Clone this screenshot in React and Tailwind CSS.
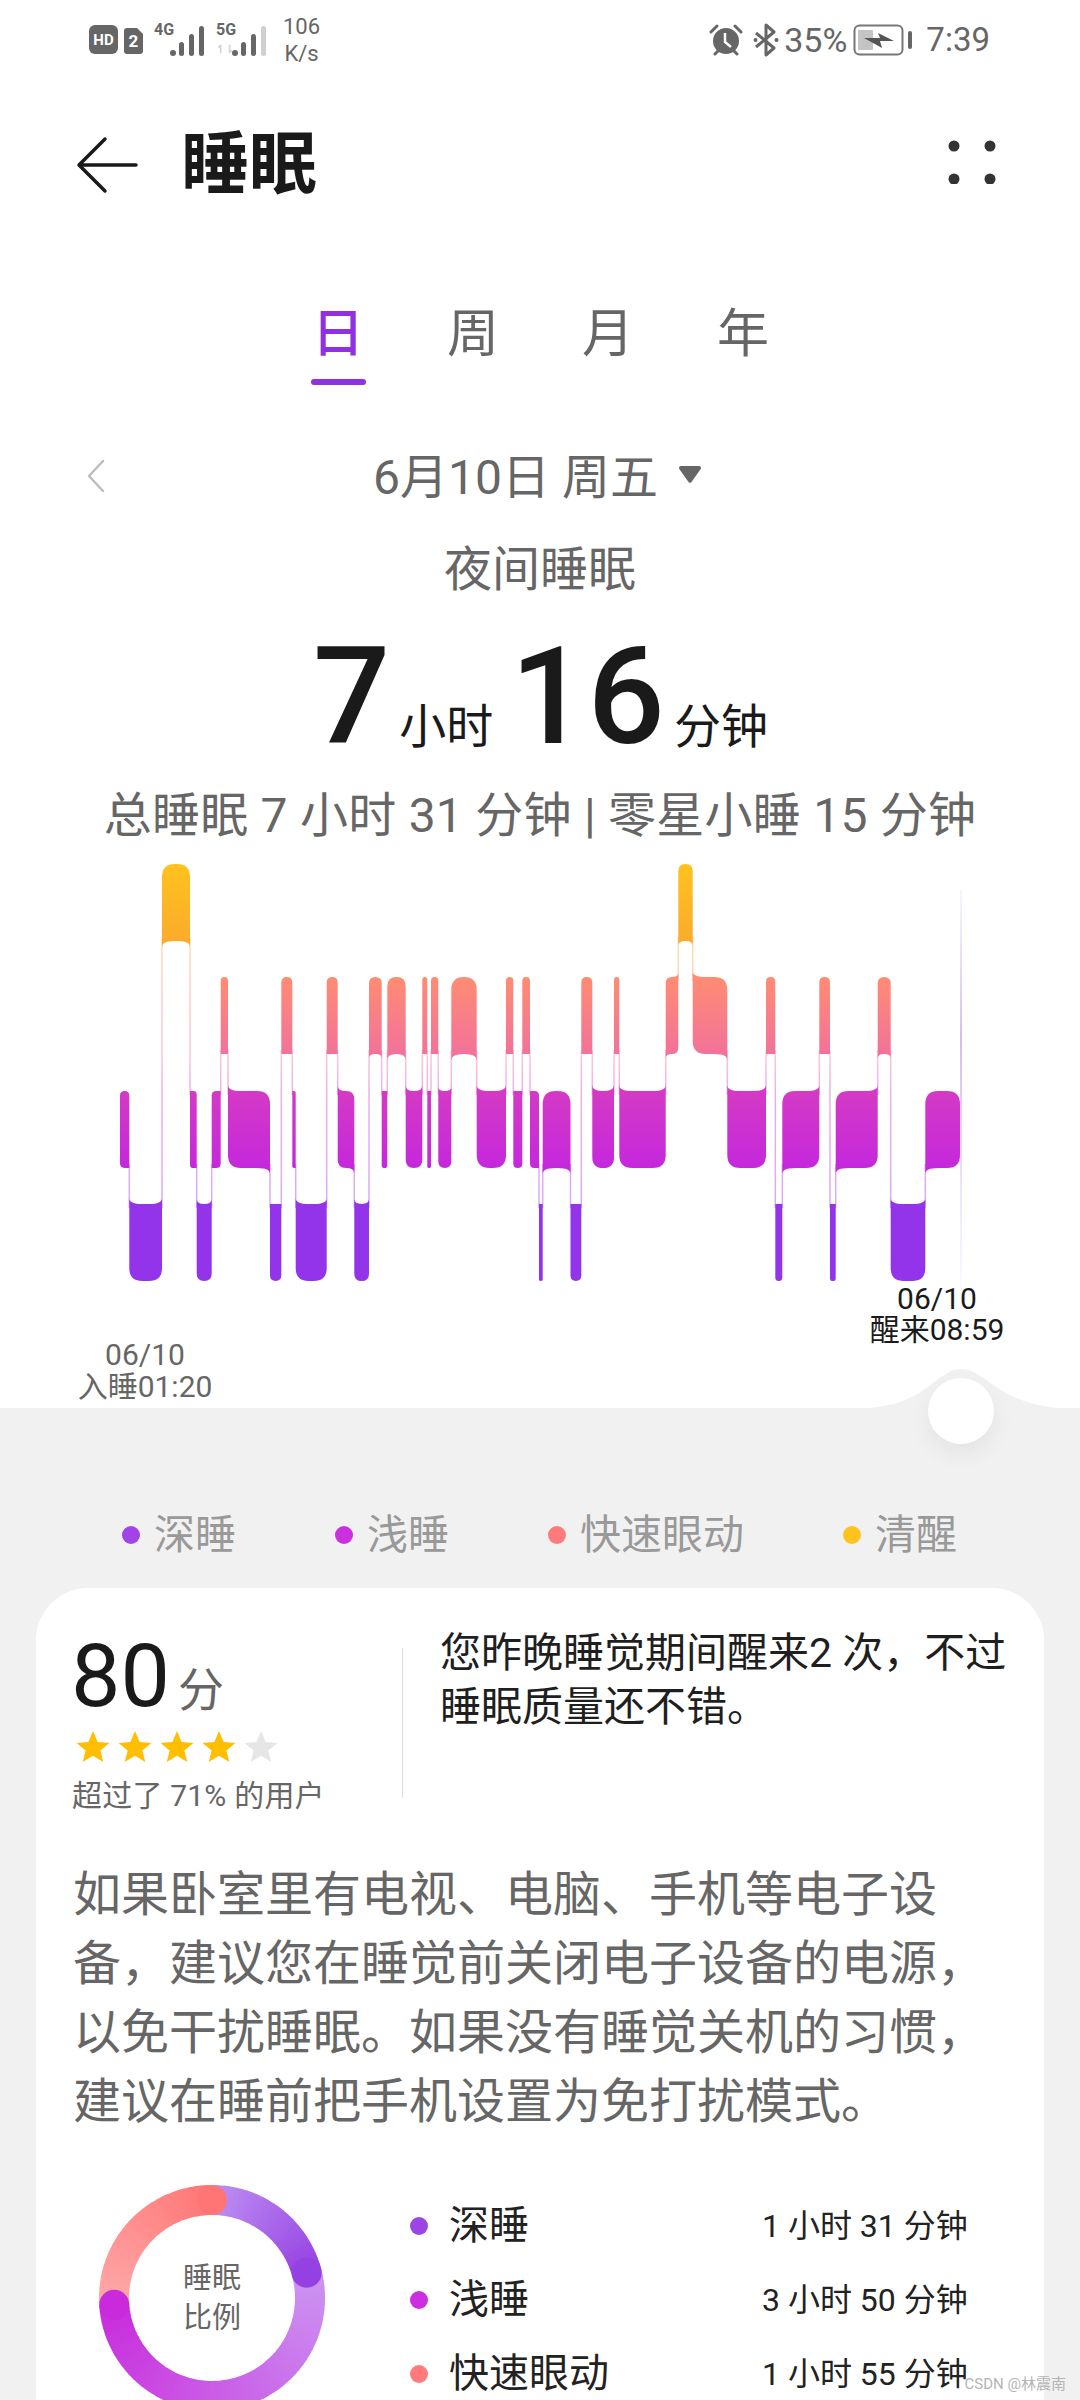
import React from "react";

const SEGS = [
  [2,120],[3,129.3],[0,162],[2,190],[3,196.7],[2,211.7],[1,220.7],[2,228],[3,270],[1,281.3],[2,292.3],[3,295.7],[1,326.7],[2,337.7],[3,354.3],[1,369],[2,381.7],[1,387.3],[2,405.7],[1,422.3],[2,427.3],[1,431],[2,438.3],[1,451.3],[2,476.7],[1,506],[2,513.3],[1,522.3],[2,530],[3,539],[2,542.7],[3,570.5],[1,581.3],[2,592.3],[1,614],[2,619.3],[1,665.7],[0,678.3],[1,692.7],[2,727.3],[1,766],[3,775.3],[2,782.3],[1,819.3],[3,830],[2,835.7],[1,877.7],[3,890.7],[2,925.3],
];
const END = 960;
const TOPS = [864, 977, 1091, 1204];
const H = 77;

function segPath(i) {
  const [lv, x0] = SEGS[i];
  const x1 = i + 1 < SEGS.length ? SEGS[i + 1][1] : END;
  const w = x1 - x0;
  const T = TOPS[lv];
  const B = T + H;
  const r = Math.min(13, w / 2);
  const f = w >= 12 ? Math.min(6, w / 3) : 0;
  const L = i > 0 ? SEGS[i - 1][0] : null;
  const R = i + 1 < SEGS.length ? SEGS[i + 1][0] : null;
  const lh = L !== null && L < lv, ll = L !== null && L > lv;
  const rh = R !== null && R < lv, rl = R !== null && R > lv;
  let d = lh ? `M${x0},${T - f} Q${x0},${T} ${x0 + r},${T}` : `M${x0},${T + r} Q${x0},${T} ${x0 + r},${T}`;
  d += ` L${x1 - r},${T}`;
  d += rh ? ` Q${x1},${T} ${x1},${T - f}` : ` Q${x1},${T} ${x1},${T + r}`;
  d += rl ? ` L${x1},${B + f} Q${x1},${B} ${x1 - r},${B}` : ` L${x1},${B - r} Q${x1},${B} ${x1 - r},${B}`;
  d += ` L${x0 + r},${B}`;
  d += ll ? ` Q${x0},${B} ${x0},${B + f}` : ` Q${x0},${B} ${x0},${B - r}`;
  return d + " Z";
}

function SleepChart() {
  const paths = SEGS.map((_, i) => segPath(i));
  const links = [];
  for (let i = 1; i < SEGS.length; i++) {
    const a = SEGS[i - 1][0], b = SEGS[i][0];
    const up = Math.min(a, b), lo = Math.max(a, b);
    links.push({ x: SEGS[i][1], y1: TOPS[up] + H - 4, y2: TOPS[lo] + 4 });
  }
  return (
    <svg width="1080" height="460" viewBox="0 860 1080 460" className="block">
      <defs>
        <linearGradient id="lv" gradientUnits="userSpaceOnUse" x1="0" y1="864" x2="0" y2="1281">
          <stop offset="0" stopColor="#FFC21E" />
          <stop offset="0.2" stopColor="#FBA92C" />
          <stop offset="0.272" stopColor="#FF8C73" />
          <stop offset="0.456" stopColor="#F2729A" />
          <stop offset="0.545" stopColor="#D43AC4" />
          <stop offset="0.727" stopColor="#C528DC" />
          <stop offset="0.815" stopColor="#9333EA" />
          <stop offset="1" stopColor="#9333EA" />
        </linearGradient>
        <linearGradient id="vl" gradientUnits="userSpaceOnUse" x1="0" y1="890" x2="0" y2="1315">
          <stop offset="0" stopColor="#D9C8F5" stopOpacity="0.2" />
          <stop offset="0.35" stopColor="#D2BEF3" />
          <stop offset="1" stopColor="#D9C8F5" stopOpacity="0" />
        </linearGradient>
      </defs>
      <rect x="960" y="890" width="2" height="425" fill="url(#vl)" />
      {links.map((l, i) => (
        <rect key={i} x={l.x - 0.75} y={l.y1} width="1.5" height={l.y2 - l.y1} fill="url(#lv)" opacity="0.4" />
      ))}
      {paths.map((d, i) => (
        <path key={i} d={d} fill="url(#lv)" />
      ))}
    </svg>
  );
}

function pol(c, r, deg) {
  const a = ((deg - 90) * Math.PI) / 180;
  return [c + r * Math.cos(a), c + r * Math.sin(a)];
}
function lerp(c1, c2, t) {
  const p = (s) => [1, 3, 5].map((k) => parseInt(s.slice(k, k + 2), 16));
  const a = p(c1), b = p(c2);
  return `rgb(${a.map((v, i) => Math.round(v + (b[i] - v) * t)).join(",")})`;
}
function Donut() {
  const c = 113, r = 98, sw = 30;
  const arcs = [
    [0, 75, "#BD8DF2", "#9540E2"],
    [75, 266, "#CB94F2", "#C92BDC"],
    [266, 360, "#FFA8A8", "#FF7575"],
  ];
  const parts = [];
  arcs.forEach(([s, e, c1, c2], k) => {
    const n = Math.ceil((e - s) / 3);
    for (let i = 0; i < n; i++) {
      const a0 = s + ((e - s) * i) / n;
      const a1 = s + ((e - s) * (i + 1)) / n + 0.4;
      const [x0, y0] = pol(c, r, a0);
      const [x1, y1] = pol(c, r, a1);
      parts.push(
        <path key={`${k}-${i}`} d={`M${x0},${y0} A${r},${r} 0 0 1 ${x1},${y1}`} fill="none" stroke={lerp(c1, c2, i / n)} strokeWidth={sw} />
      );
    }
  });
  return (
    <svg width="226" height="226" viewBox="0 0 226 226" className="block">
      {parts}
      {arcs.map(([, e, , c2], k) => {
        const [x, y] = pol(c, r, e);
        return <circle key={k} cx={x} cy={y} r={sw / 2} fill={c2} />;
      })}
    </svg>
  );
}

function Star({ on }) {
  return (
    <svg width="34" height="31" viewBox="0 0 34 32" className="block">
      <polygon points="17,0 21.8,11.4 34,12.3 24.6,20.2 27.6,32 17,25.6 6.4,32 9.4,20.2 0,12.3 12.2,11.4" fill={on ? "#FFBE00" : "#E6E6E6"} />
    </svg>
  );
}

function Bars({ last }) {
  const hs = [6, 14, 22, 30];
  return (
    <svg width="34" height="30" viewBox="0 0 34 30" className="block">
      <circle cx="3" cy="27" r="3" fill="#666" />
      {[1, 2, 3].map((k) => (
        <rect key={k} x={k * 10 - 1} y={30 - hs[k]} width="5" height={hs[k]} rx="2.5" fill={k === 3 && last ? "#cfcfcf" : "#666"} />
      ))}
    </svg>
  );
}

function StatusBar() {
  return (
    <div className="flex h-[80px] items-center justify-between pl-[89px] pr-[90px] text-[#666]">
      <div className="flex items-center">
        <svg width="54" height="30" viewBox="0 0 54 30" className="block">
          <rect width="29" height="29" rx="6" fill="#666" />
          <text x="14.5" y="20" textAnchor="middle" fontSize="15" fontWeight="700" fill="#fff" fontFamily="Roboto">HD</text>
          <path d="M38 3 H48 L54 9 V26 a3 3 0 0 1 -3 3 H38 a3 3 0 0 1 -3 -3 V6 a3 3 0 0 1 3 -3 Z" fill="#666" />
          <text x="44.5" y="22" textAnchor="middle" fontSize="17" fontWeight="700" fill="#fff" fontFamily="Roboto">2</text>
        </svg>
        <div className="relative ml-[11px] flex h-[32px] w-[50px] items-end justify-end">
          <span className="absolute left-0 top-[-2px] font-['Roboto',sans-serif] text-[16px] font-bold leading-[16px] text-[#666]">4G</span>
          <Bars />
        </div>
        <div className="relative ml-[12px] flex h-[32px] w-[50px] items-end justify-end">
          <span className="absolute left-0 top-[-2px] font-['Roboto',sans-serif] text-[16px] font-bold leading-[16px] text-[#666]">5G</span>
          <span className="absolute bottom-0 left-0 font-['Roboto',sans-serif] text-[11px] font-bold leading-[12px] text-[#cfcfcf]">↿⇂</span>
          <Bars last />
        </div>
        <div className="ml-[17px] flex flex-col items-center font-['Roboto',sans-serif] text-[22px] leading-[27px]">
          <span>106</span>
          <span>K/s</span>
        </div>
      </div>
      <div className="flex items-center font-['Roboto',sans-serif]">
        <svg width="34" height="32" viewBox="0 0 34 32" className="block">
          <circle cx="17" cy="17" r="13" fill="#666" />
          <path d="M16 9 V18 L22 23" fill="none" stroke="#fff" strokeWidth="2.5" />
          <path d="M2 8 L8 2 M32 8 L26 2 M6 30 L9 27 M28 30 L25 27" stroke="#666" strokeWidth="3" strokeLinecap="round" />
        </svg>
        <svg width="26" height="34" viewBox="0 0 26 34" className="ml-[10px] block">
          <path d="M3 10 L21 25 L13 32 V2 L21 9 L3 24" fill="none" stroke="#666" strokeWidth="3" strokeLinejoin="round" />
          <circle cx="2.5" cy="17" r="2" fill="#666" />
          <circle cx="23.5" cy="17" r="2" fill="#666" />
        </svg>
        <span className="ml-[5px] text-[34px] leading-[36px]">35%</span>
        <svg width="60" height="32" viewBox="0 0 60 32" className="ml-[6px] block">
          <rect x="1.5" y="1.5" width="48" height="29" rx="5" fill="none" stroke="#777" strokeWidth="2" />
          <rect x="5" y="6" width="15" height="20" rx="1" fill="#c4c4c4" />
          <path d="M11 14 L27 14 L25 9 L41 17 L27 17 L29 24 Z" fill="#555" />
          <rect x="55" y="7" width="4" height="18" rx="2" fill="#666" />
        </svg>
        <span className="ml-[13px] text-[33px] leading-[36px]">7:39</span>
      </div>
    </div>
  );
}

function LegendDot({ color, label }) {
  return (
    <div className="flex items-center gap-[14px]">
      <span className="h-[18px] w-[18px] rounded-full" style={{ background: color }} />
      <span className="text-[41px] leading-[50px] text-[#999]">{label}</span>
    </div>
  );
}

function ListRow({ color, label, value }) {
  return (
    <div className="flex h-[74px] items-center">
      <span className="h-[18px] w-[18px] rounded-full" style={{ background: color }} />
      <span className="ml-[21px] w-[313px] text-[40px] leading-[50px] text-[#222]">{label}</span>
      <span className="whitespace-nowrap text-[32px] leading-[40px] text-[#222]">{value}</span>
    </div>
  );
}

export default function App() {
  return (
    <div className="h-[2400px] w-[1080px] overflow-hidden bg-white font-['Roboto','Noto_Sans_CJK_SC',sans-serif]">
      <StatusBar />

      <div className="flex h-[170px] items-center justify-between pl-[76px] pr-[84px]">
        <div className="flex items-center">
          <svg width="62" height="58" viewBox="0 0 62 58" className="block">
            <path d="M29 3 L3 29 L29 55 M3 29 H60" fill="none" stroke="#1a1a1a" strokeWidth="3.5" strokeLinecap="round" strokeLinejoin="round" />
          </svg>
          <h1 className="ml-[43px] text-[68px] font-bold leading-[80px] text-[#1a1a1a]">睡眠</h1>
        </div>
        <svg width="48" height="44" viewBox="0 0 48 44" className="mt-[-6px] block">
          <circle cx="6" cy="6" r="5.5" fill="#333" />
          <circle cx="42" cy="6" r="5.5" fill="#333" />
          <circle cx="6" cy="39" r="5.5" fill="#333" />
          <circle cx="42" cy="39" r="5.5" fill="#333" />
        </svg>
      </div>

      <div className="flex h-[140px] gap-[83px] pl-[312px] pt-[55px] text-[52px] leading-[60px] text-[#666]">
        <div className="flex w-[52px] flex-col items-center text-[#9030E0]">
          <span className="font-medium">日</span>
          <span className="mt-[14px] h-[6px] w-[55px] shrink-0 rounded-full bg-[#9030E0]" />
        </div>
        <span className="w-[52px]">周</span>
        <span className="w-[52px]">月</span>
        <span className="w-[52px]">年</span>
      </div>

      <div className="mt-[58px] grid h-[60px] grid-cols-[1fr_auto_1fr] items-center pr-[6px] text-[#666]">
        <svg width="19" height="34" viewBox="0 0 19 34" className="ml-[86px] mt-[-4px] block">
          <path d="M17 2 L3 17 L17 32" fill="none" stroke="#bdbdbd" strokeWidth="2.5" strokeLinecap="round" strokeLinejoin="round" />
        </svg>
        <div className="flex items-center gap-[21px]">
          <span className="text-[48px] leading-[60px]">6月10日 周五</span>
          <svg width="22" height="17" viewBox="0 0 22 17" className="mt-[-8px] block">
            <path d="M2 0 H20 a2 2 0 0 1 1.7 3 L12.5 16 a2 2 0 0 1 -3 0 L0.3 3 A2 2 0 0 1 2 0 Z" fill="#666" />
          </svg>
        </div>
        <span />
      </div>

      <div className="mt-[32px] text-center text-[48px] leading-[60px] text-[#666]">夜间睡眠</div>

      <div className="mt-[32px] flex h-[130px] items-baseline pl-[313px] text-[#1a1a1a]">
        <span className="text-[136px] font-medium leading-[130px]">7</span>
        <span className="ml-[9px] text-[47px] leading-[60px]">小时</span>
        <span className="ml-[17px] text-[136px] font-medium leading-[130px]">16</span>
        <span className="ml-[9px] text-[47px] leading-[60px]">分钟</span>
      </div>

      <div className="mt-[24px] whitespace-nowrap text-center text-[48px] leading-[60px] tracking-[0.25px] text-[#666]">总睡眠 7 小时 31 分钟 | 零星小睡 15 分钟</div>

      <div className="relative mt-[14px] h-[548px]">
        <SleepChart />
        <div className="absolute left-[77px] top-[479px] w-[136px] whitespace-nowrap text-center text-[30px] leading-[32px] text-[#666]">
          <div>06/10</div>
          <div>入睡01:20</div>
        </div>
        <div className="absolute left-[869px] top-[423px] w-[136px] whitespace-nowrap text-center text-[30px] leading-[31px] text-[#1a1a1a]">
          <div>06/10</div>
          <div>醒来08:59</div>
        </div>
      </div>

      <div className="relative h-[992px] bg-[#F1F1F1]">
        <svg width="240" height="41" viewBox="0 0 240 41" className="absolute left-[840px] top-[-40px] block">
          <path d="M0 41 C50 41 68 34 92 16 C106 5 112 1 121 1 C130 1 137 5 152 16 C178 34 200 41 240 41 Z" fill="#F1F1F1" />
        </svg>
        <div className="absolute left-[928px] top-[-30px] h-[66px] w-[66px] rounded-full bg-white shadow-[0_10px_24px_rgba(0,0,0,0.06)]" />

        <div className="flex gap-[99px] pl-[122px] pt-[102px]">
          <LegendDot color="#A044E8" label="深睡" />
          <LegendDot color="#CC2FE0" label="浅睡" />
          <LegendDot color="#FF7B7B" label="快速眼动" />
          <LegendDot color="#FFC21E" label="清醒" />
        </div>

        <div className="mx-[36px] mt-[28px] h-[900px] rounded-[52px] bg-white pl-[38px] pt-[50px]">
          <div className="flex">
            <div className="w-[328px]">
              <div className="flex h-[76px] items-baseline">
                <span className="ml-[-3px] text-[88px] leading-[76px] text-[#1a1a1a]">80</span>
                <span className="ml-[8px] text-[46px] leading-[50px] text-[#666]">分</span>
              </div>
              <div className="mt-[17px] flex gap-[8px] pl-[2px]">
                <Star on /><Star on /><Star on /><Star on /><Star />
              </div>
              <div className="mt-[14px] ml-[-2px] whitespace-nowrap text-[30px] leading-[40px] tracking-[0.2px] text-[#666]">超过了 71% 的用户</div>
            </div>
            <div className="mt-[10px] h-[150px] w-px bg-[#dddddd]" />
            <div className="ml-[37px] mt-[-12px] w-[570px] text-[41px] leading-[54px] text-[#1f1f1f]">
              <div className="whitespace-nowrap">您昨晚睡觉期间醒来2 次，不过</div>
              <div>睡眠质量还不错。</div>
            </div>
          </div>

          <div className="mt-[44px] ml-[-1px] whitespace-nowrap text-[48px] leading-[69px] text-[#666]">
            <div>如果卧室里有电视、电脑、手机等电子设</div>
            <div>备，建议您在睡觉前关闭电子设备的电源，</div>
            <div>以免干扰睡眠。如果没有睡觉关机的习惯，</div>
            <div>建议在睡前把手机设置为免打扰模式。</div>
          </div>

          <div className="mt-[49px] flex items-start">
            <div className="relative ml-[25px] h-[226px] w-[226px]">
              <Donut />
              <div className="absolute inset-0 flex flex-col items-center justify-center text-[29px] leading-[40px] text-[#666]">
                <span>睡眠</span>
                <span>比例</span>
              </div>
            </div>
            <div className="ml-[85px] mt-[4px]">
              <ListRow color="#9B45E4" label="深睡" value="1 小时 31 分钟" />
              <ListRow color="#CC2FE0" label="浅睡" value="3 小时 50 分钟" />
              <ListRow color="#FF7B7B" label="快速眼动" value="1 小时 55 分钟" />
            </div>
          </div>
        </div>

        <div className="absolute bottom-[6px] right-[14px] whitespace-nowrap text-[15px] leading-[20px] text-[#b4b4b4]">CSDN @林震南</div>
      </div>
    </div>
  );
}
